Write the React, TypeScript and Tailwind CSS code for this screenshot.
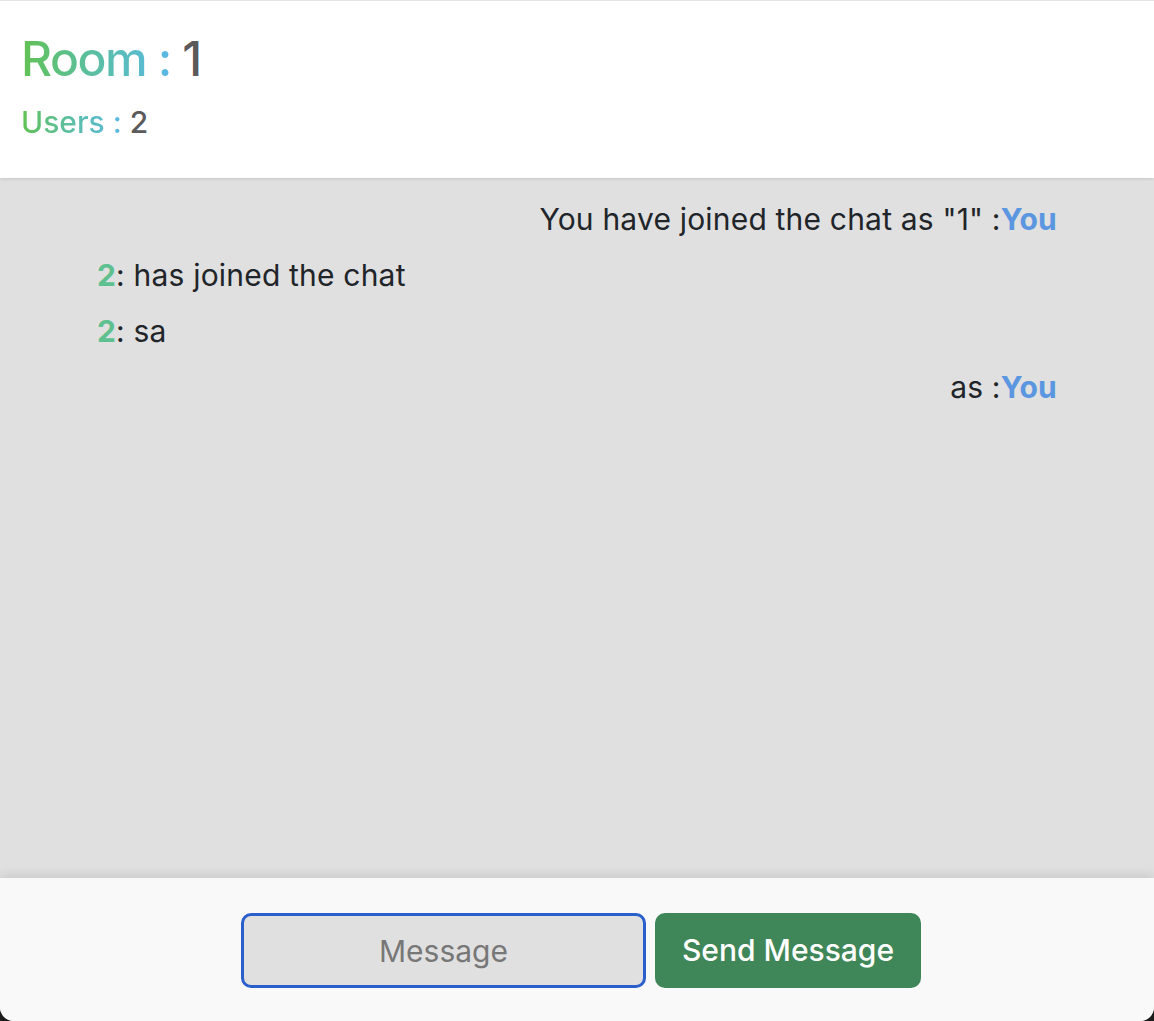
const messages = [
	{ id: 1, mine: true, user: '1', text: 'You have joined the chat as "1" ' },
	{ id: 2, mine: false, user: '2', text: 'has joined the chat' },
	{ id: 3, mine: false, user: '2', text: 'sa' },
	{ id: 4, mine: true, user: '1', text: 'as ' },
];

const gradientText =
	'bg-gradient-to-r from-[#62c150] to-[#5bb7e6] bg-clip-text text-transparent';

export default function App() {
	return (
		<div className="flex h-[1021px] flex-col bg-[#1c1c1c] font-['Inter','Noto_Sans',sans-serif] [font-feature-settings:'calt'_0]">
			<div className="flex flex-1 flex-col overflow-hidden rounded-b-[14px] bg-[#e0e0e0]">
				<header className="relative z-10 border-t border-[#e4e4e4] bg-white px-[21px] pt-[30px] pb-[38px] shadow-[0_1px_3px_rgba(0,0,0,0.12)]">
					<h1 className="text-[48px] leading-[56px] font-medium tracking-[-0.03em]">
						<span className={gradientText}>Room :</span>{' '}
						<span className="text-[#5a5a5a]">1</span>
					</h1>
					<h3 className="mt-[17px] text-[30px] leading-[36px] font-medium">
						<span className={gradientText}>Users :</span>{' '}
						<span className="text-[#5a5a5a]">2</span>
					</h3>
				</header>

				<main className="flex flex-1 flex-col gap-[20px] px-[97px] pt-[23px] tracking-[0.012em]">
					{messages.map((m) =>
						m.mine ? (
							<p
								key={m.id}
								className="text-right text-[30px] leading-[36px] text-[#212529]"
							>
								{m.text}:<span className="font-bold text-[#5b96e0]">You</span>
							</p>
						) : (
							<p
								key={m.id}
								className="text-[30px] leading-[36px] text-[#212529]"
							>
								<span className="font-bold text-[#5fc08f]">{m.user}</span>:{' '}
								{m.text}
							</p>
						)
					)}
				</main>

				<footer className="relative z-10 flex h-[143px] items-center justify-center gap-[9px] bg-[#f9f9f9] pt-[2px] pl-[8px] shadow-[0_-3px_10px_rgba(0,0,0,0.1)]">
					<input
						type="text"
						placeholder="Message"
						className="h-[75px] w-[405px] rounded-[10px] border-[3px] border-[#2b5fcb] bg-[#e0e0e0] text-center text-[30px] text-[#212529] outline-none placeholder:text-[#777]"
					/>
					<button
						type="button"
						className="h-[75px] w-[266px] rounded-[10px] bg-[#3f8658] text-[30px] font-medium text-white"
					>
						Send Message
					</button>
				</footer>
			</div>
		</div>
	);
}
